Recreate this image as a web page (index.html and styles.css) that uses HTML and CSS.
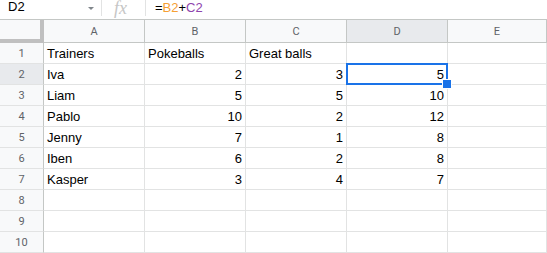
FILE: index.html
```html
<!DOCTYPE html>
<html lang="en">
<head>
  <meta charset="UTF-8">
  <title>Trainers sheet</title>
  <link rel="stylesheet" href="styles.css">
</head>
<body>
  <div class="formula-bar">
    <div class="name-box">
      <span class="cell-ref">D2</span>
      <span class="caret"></span>
    </div>
    <div class="fx">fx</div>
    <div class="formula">=<span class="ref-b">B2</span>+<span class="ref-c">C2</span></div>
  </div>

  <div class="grid">
    <div class="corner"></div>
    <div class="col-head">A</div>
    <div class="col-head">B</div>
    <div class="col-head">C</div>
    <div class="col-head active">D</div>
    <div class="col-head">E</div>

    <div class="row-head">1</div>
    <div class="cell">Trainers</div>
    <div class="cell">Pokeballs</div>
    <div class="cell">Great balls</div>
    <div class="cell"></div>
    <div class="cell"></div>

    <div class="row-head active">2</div>
    <div class="cell">Iva</div>
    <div class="cell num">2</div>
    <div class="cell num">3</div>
    <div class="cell num selected">5</div>
    <div class="cell"></div>

    <div class="row-head">3</div>
    <div class="cell">Liam</div>
    <div class="cell num">5</div>
    <div class="cell num">5</div>
    <div class="cell num">10</div>
    <div class="cell"></div>

    <div class="row-head">4</div>
    <div class="cell">Pablo</div>
    <div class="cell num">10</div>
    <div class="cell num">2</div>
    <div class="cell num">12</div>
    <div class="cell"></div>

    <div class="row-head">5</div>
    <div class="cell">Jenny</div>
    <div class="cell num">7</div>
    <div class="cell num">1</div>
    <div class="cell num">8</div>
    <div class="cell"></div>

    <div class="row-head">6</div>
    <div class="cell">Iben</div>
    <div class="cell num">6</div>
    <div class="cell num">2</div>
    <div class="cell num">8</div>
    <div class="cell"></div>

    <div class="row-head">7</div>
    <div class="cell">Kasper</div>
    <div class="cell num">3</div>
    <div class="cell num">4</div>
    <div class="cell num">7</div>
    <div class="cell"></div>

    <div class="row-head">8</div>
    <div class="cell"></div>
    <div class="cell"></div>
    <div class="cell"></div>
    <div class="cell"></div>
    <div class="cell"></div>

    <div class="row-head">9</div>
    <div class="cell"></div>
    <div class="cell"></div>
    <div class="cell"></div>
    <div class="cell"></div>
    <div class="cell"></div>

    <div class="row-head">10</div>
    <div class="cell"></div>
    <div class="cell"></div>
    <div class="cell"></div>
    <div class="cell"></div>
    <div class="cell"></div>
  </div>
</body>
</html>
```

FILE: styles.css
```css
:root {
  --grid-line: #e2e3e3;
  --header-line: #c4c7c5;
  --header-bg: #f8f9fa;
  --header-active: #e8eaed;
  --header-text: #5f6368;
  --select-color: #1a73e8;
  --text-color: #000000;
}

* {
  box-sizing: border-box;
}

body {
  margin: 0;
  width: 547px;
  height: 253px;
  overflow: hidden;
  background: #ffffff;
  font-family: "Liberation Sans", Arial, sans-serif;
  color: var(--text-color);
}

/* formula bar */

.formula-bar {
  display: flex;
  height: 20px;
  border-bottom: 1px solid var(--header-line);
}

.name-box {
  width: 102px;
  display: flex;
  align-items: center;
  justify-content: space-between;
  padding: 0 7px 3px 8px;
  border-right: 1px solid var(--grid-line);
  font-size: 13px;
  margin-bottom: 3px;
}

.caret {
  width: 0;
  height: 0;
  border-left: 3px solid transparent;
  border-right: 3px solid transparent;
  border-top: 3px solid #80868b;
  margin-top: 4px;
}

.fx {
  width: 44px;
  padding: 1px 0 0 12px;
  font-family: "Liberation Serif", serif;
  font-style: italic;
  font-size: 18px;
  line-height: 14px;
  color: #c6c6c6;
  border-right: 1px solid var(--grid-line);
  margin-bottom: 3px;
}

.formula {
  padding-left: 9px;
  font-size: 13px;
  line-height: 16px;
}

.ref-b {
  color: #f6a034;
}

.ref-c {
  color: #8e44ad;
}

/* grid */

.grid {
  display: grid;
  grid-template-columns: 44px 101px 101px 101px 101px 1fr;
  grid-template-rows: 23px;
  grid-auto-rows: 21px;
}

.corner {
  background: var(--header-bg);
  border-right: 4px solid #c0c0c0;
  border-bottom: 4px solid #c0c0c0;
}

.col-head {
  background: var(--header-bg);
  border-right: 1px solid var(--header-line);
  border-bottom: 1px solid var(--header-line);
  display: flex;
  align-items: center;
  justify-content: center;
  font-family: Roboto, "Liberation Sans", sans-serif;
  font-size: 11px;
  color: var(--header-text);
}

.row-head {
  background: var(--header-bg);
  border-right: 1px solid var(--header-line);
  border-bottom: 1px solid var(--grid-line);
  display: flex;
  align-items: center;
  justify-content: center;
  font-family: Roboto, "Liberation Sans", sans-serif;
  font-size: 11px;
  color: var(--header-text);
}

.col-head.active,
.row-head.active {
  background: var(--header-active);
}

.cell {
  border-right: 1px solid var(--grid-line);
  border-bottom: 1px solid var(--grid-line);
  display: flex;
  align-items: flex-end;
  padding: 0 3px 2px;
  font-size: 13px;
  line-height: 15px;
  white-space: nowrap;
}

.cell.num {
  justify-content: flex-end;
}

.cell.selected {
  position: relative;
}

.cell.selected::before {
  content: "";
  position: absolute;
  top: -1px;
  left: -1px;
  right: -1px;
  bottom: -1px;
  border: 2px solid var(--select-color);
}

.cell.selected::after {
  content: "";
  position: absolute;
  right: -5px;
  bottom: -5px;
  width: 8px;
  height: 8px;
  background: var(--select-color);
  border: 1px solid #ffffff;
}
```
